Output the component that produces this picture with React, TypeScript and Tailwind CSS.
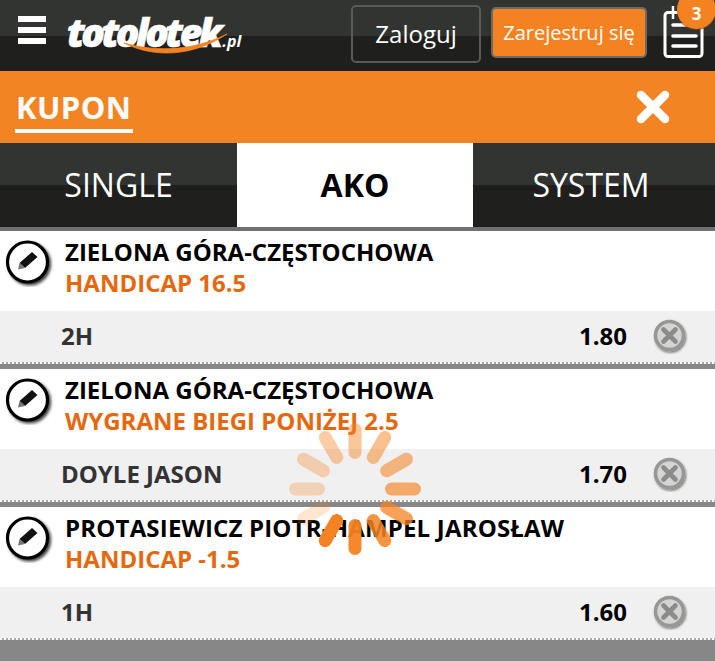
import React from 'react';

const bets = [
  { match: 'ZIELONA GÓRA-CZĘSTOCHOWA', market: 'HANDICAP 16.5', pick: '2H', odds: '1.80' },
  { match: 'ZIELONA GÓRA-CZĘSTOCHOWA', market: 'WYGRANE BIEGI PONIŻEJ 2.5', pick: 'DOYLE JASON', odds: '1.70' },
  { match: 'PROTASIEWICZ PIOTR-HAMPEL JAROSŁAW', market: 'HANDICAP -1.5', pick: '1H', odds: '1.60' },
];

// clockwise from 12 o'clock
const spinnerOpacity = [0.45, 0.5, 0.55, 0.65, 0.75, 0.85, 0.95, 1, 0.2, 0.28, 0.33, 0.4];

function EditIcon() {
  return (
    <svg width="50" height="50" viewBox="0 0 50 50" className="shrink-0">
      <defs>
        <filter id="edit-shadow" x="-30%" y="-30%" width="160%" height="160%">
          <feDropShadow dx="2" dy="2" stdDeviation="1.6" floodColor="#000" floodOpacity="0.75" />
        </filter>
      </defs>
      <circle cx="23.5" cy="25" r="20" fill="#fff" stroke="#000" strokeWidth="3.2" filter="url(#edit-shadow)" />
      <path d="M28 15l5.5 5L21 31l-5.5-5z" fill="#111" />
      <path d="M15.5 26l5.5 5-7 1.5z" fill="#777" />
    </svg>
  );
}

function RemoveIcon() {
  return (
    <svg width="36" height="36" viewBox="0 0 36 36">
      <defs>
        <filter id="remove-shadow" x="-30%" y="-30%" width="160%" height="160%">
          <feDropShadow dx="1" dy="1.5" stdDeviation="1" floodColor="#000" floodOpacity="0.5" />
        </filter>
      </defs>
      <circle cx="17.5" cy="17.5" r="14" fill="#d4d4d4" stroke="#979896" strokeWidth="3.6" filter="url(#remove-shadow)" />
      <path d="M11.5 11.5l12 12M23.5 11.5l-12 12" stroke="#8b8c8a" strokeWidth="4.6" strokeLinecap="round" />
    </svg>
  );
}

function Spinner() {
  return (
    <svg width="134" height="134" viewBox="0 0 134 134" className="absolute left-[288px] top-[422px]">
      {spinnerOpacity.map((o, i) => (
        <rect
          key={i}
          x="60.5"
          y="1"
          width="13"
          height="36"
          rx="6.5"
          fill="#f58220"
          opacity={o}
          transform={`rotate(${i * 30} 67 67)`}
        />
      ))}
    </svg>
  );
}

function ClipboardIcon() {
  return (
    <svg width="42" height="60" viewBox="0 0 42 60" className="block">
      <rect x="2" y="8.5" width="37" height="44" rx="3" fill="none" stroke="#fff" strokeWidth="3" />
      <path d="M10 21h23M10 32h23M10 42h23" stroke="#fff" strokeWidth="3.6" strokeLinecap="round" />
      <path d="M10 2v13" stroke="#fff" strokeWidth="2.5" />
    </svg>
  );
}

export default function App() {
  return (
    <div className="relative h-[661px] w-[715px] overflow-hidden bg-[#868786] font-['Open_Sans',sans-serif]">
      {/* top bar */}
      <header className="flex h-[71px] items-center bg-[linear-gradient(#323432_0,#323432_36px,#1f201e_36px)]">
        <div className="mb-[11px] ml-[18px] flex w-[28px] flex-col gap-[5px]">
          <span className="h-[6px] bg-white" />
          <span className="h-[6px] bg-white" />
          <span className="h-[6px] bg-white" />
        </div>
        <div className="relative mb-[8px] ml-[21px] flex h-[40px] w-[178px] items-baseline whitespace-nowrap text-white">
          <span className="text-[39px] font-extrabold italic leading-[40px] tracking-[-3.5px] [-webkit-text-stroke:0.6px_white]">
            totolotek
          </span>
          <span className="ml-[3px] text-[16px] font-bold italic leading-none">.pl</span>
          <svg width="110" height="24" viewBox="0 0 110 24" className="absolute left-[56px] top-[21px]">
            <path d="M1 10c30 15 68 14 103-9C72 17 36 20 1 10z" fill="#f58220" stroke="#f58220" strokeWidth="0.8" />
          </svg>
        </div>
        <button className="mb-[3px] ml-[106px] h-[58px] w-[130px] rounded-[5px] border-2 border-[#5a5b59] bg-transparent text-[24px] text-white">
          Zaloguj
        </button>
        <button className="mb-[6px] ml-[10px] h-[51px] w-[156px] rounded-[5px] border-2 border-[#6b6a64] bg-[#f58220] text-[20px] text-white">
          Zarejestruj się
        </button>
        <div className="relative mb-[3px] ml-[16px] h-[60px] w-[40px]">
          <ClipboardIcon />
          <span className="absolute left-[14px] top-[-14px] flex h-[39px] w-[39px] items-center justify-center rounded-full bg-[#f58220] pt-[8px] text-[17px] font-bold text-white shadow-[0_1px_1px_rgba(120,70,20,0.8)]">
            3
          </span>
        </div>
      </header>

      {/* coupon title */}
      <div className="flex h-[72px] items-center justify-between bg-[#f38423] pl-[15px] pr-[44px]">
        <span className="mt-[10px] w-[118px] whitespace-nowrap border-b-[4px] border-white pb-[6px] pl-[1px] text-[31px] font-bold leading-[32px] tracking-[0.4px] text-white">
          KUPON
        </span>
        <svg width="36" height="36" viewBox="0 0 36 36">
          <path d="M6 6l24 24M30 6L6 30" stroke="#fff" strokeWidth="8.5" strokeLinecap="round" />
        </svg>
      </div>

      {/* tabs */}
      <div className="grid h-[84px] grid-cols-[237px_236px_236px_6px] text-center text-[32px] leading-[84px]">
        <div className="bg-[linear-gradient(#323432_0,#323432_42px,#1f201e_42px)] text-white">SINGLE</div>
        <div className="bg-white font-bold text-black">AKO</div>
        <div className="bg-[linear-gradient(#323432_0,#323432_42px,#1f201e_42px)] text-white">SYSTEM</div>
        <div className="bg-[linear-gradient(#323432_0,#323432_42px,#1f201e_42px)]" />
      </div>
      <div className="h-[4px] bg-[#6f706f]" />

      {/* bets */}
      <div className="flex flex-col gap-[5px]">
        {bets.map((bet, i) => (
          <div key={i}>
            <div className="flex h-[80px] bg-white pl-[4px] pt-[6px]">
              <EditIcon />
              <div className="-mt-[1px] ml-[11px] text-[24px] font-bold leading-[31px]">
                <div className={i === 2 ? 'tracking-[0.18px] text-black' : 'text-black'}>{bet.match}</div>
                <div className="text-[#e5680f]">{bet.market}</div>
              </div>
            </div>
            <div className="flex h-[51px] items-center bg-[#f0f0f0] pb-[2px] pl-[61px] pr-[27px] text-[24px] font-bold">
              <span className="text-[#333]">{bet.pick}</span>
              <span className="ml-auto mr-[25px] text-black">{bet.odds}</span>
              <RemoveIcon />
            </div>
            <div className="h-[2px] bg-[repeating-linear-gradient(90deg,#fff_0,#fff_2px,#a8a8a8_2px,#a8a8a8_4px)]" />
          </div>
        ))}
      </div>

      <Spinner />
    </div>
  );
}
